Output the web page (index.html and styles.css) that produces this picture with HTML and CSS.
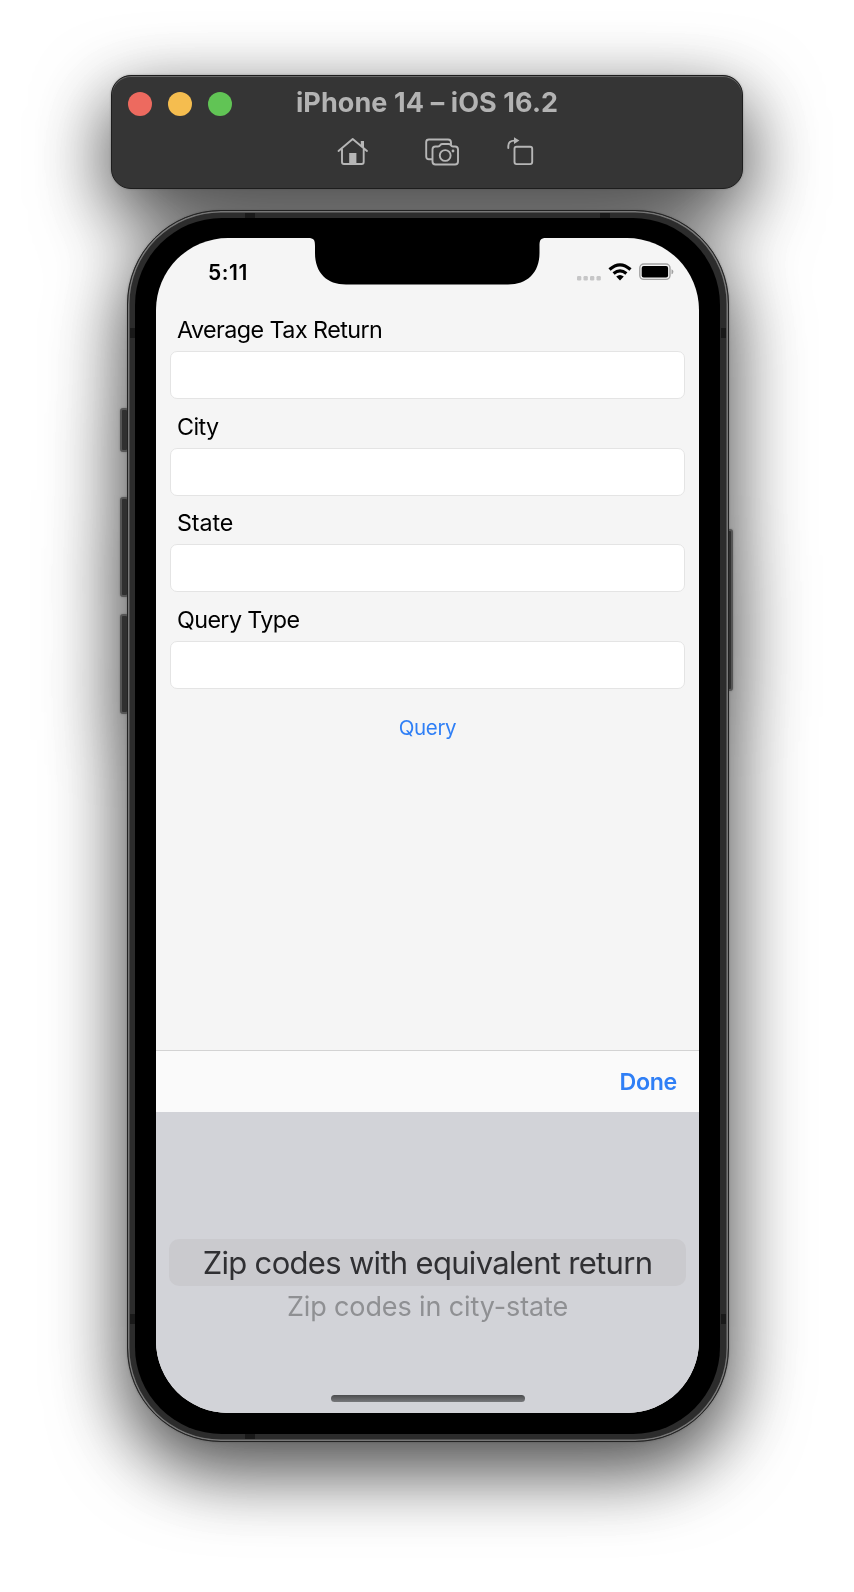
FILE: index.html
```html
<!DOCTYPE html>
<html lang="en">
<head>
<meta charset="utf-8">
<title>iPhone 14 – iOS 16.2</title>
<link rel="stylesheet" href="styles.css">
</head>
<body>
<main class="simulator">
  <header class="window-bar">
    <div class="title-row">
      <div class="lights"><i class="light red"></i><i class="light yellow"></i><i class="light green"></i></div>
      <h1 class="title">iPhone 14 – iOS 16.2</h1>
    </div>
    <div class="tools">
      <svg class="tool" width="32" height="30" viewBox="0 0 32 30"><path d="M1.500 14 L15.700 2 L30 14 M5 12.500 V25 Q5 27 7 27 H24.700 Q26.700 27 26.700 25 V12.500"/><path class="solid" d="M12.200 16 H19.400 V27 H12.200 Z M23.800 4 H27 V11.500 L23.800 9 Z"/></svg>
      <svg class="tool camera" width="34" height="30" viewBox="0 0 34 30"><path d="M7 22.300 H4 Q1.200 22.300 1.200 19.500 V5 Q1.200 2.500 4 2.500 H23 Q26 2.500 26 5.500 V7.500"/><path d="M10.500 9.500 H13 Q14.500 9.500 15.300 8 Q16 7 17.500 7 H23.500 Q25 7 25.700 8 Q26.500 9.500 28 9.500 H30 Q33 9.500 33 12.500 V24.500 Q33 27.500 30 27.500 H10.500 Q7.500 27.500 7.500 24.500 V12.500 Q7.500 9.500 10.500 9.500 Z"/><circle cx="20.200" cy="18.500" r="5.400"/><circle class="solid" cx="28" cy="14" r="1.400"/></svg>
      <svg class="tool" width="28" height="30" viewBox="0 0 28 30"><path d="M1.300 11 V9 Q1.300 3.600 7.500 3.600 H8"/><path class="solid" d="M7 .3 L12.400 3.600 L7 6.900 Z"/><rect x="7.500" y="9.800" width="17.700" height="17.300" rx="2"/></svg>
    </div>
  </header>

  <section class="device">
    <i class="key key-mute"></i><i class="key key-up"></i><i class="key key-down"></i><i class="key key-power"></i>
    <div class="frame">
      <i class="band band-tl"></i><i class="band band-tr"></i><i class="band band-bl"></i>
      <i class="band side band-lt"></i><i class="band side band-rt"></i><i class="band side band-lb"></i><i class="band side band-rb"></i>
      <div class="bezel">
        <div class="screen">
          <svg class="notch" width="238" height="47" viewBox="0 0 238 47"><path d="M0 0 C6 0 7 2 7 8 V15 C7 35 19 46.500 38 46.500 H200 C219 46.500 231.500 35 231.500 15 V8 C231.500 2 232.500 0 238 0 Z"/></svg>
          <div class="status">
            <span class="time">5:11</span>
            <div class="indicators">
              <svg width="24" height="5" viewBox="0 0 24 5" fill="#c6c6c7"><rect width="4.300" height="4.500" rx="1.200"/><rect x="6.500" width="4.300" height="4.500" rx="1.200"/><rect x="13" width="4.300" height="4.500" rx="1.200"/><rect x="19.500" width="4.300" height="4.500" rx="1.200"/></svg>
              <svg class="wifi" width="24" height="18" viewBox="0 0 24 18" fill="none" stroke="#000" stroke-width="3.200"><path d="M1.500 6.500 Q12 -2.900 22.500 6.500"/><path d="M5.600 10.600 Q12 5.300 18.400 10.600"/><path d="M8.200 13.600 Q12 10.600 15.800 13.600 L12 17.400 Z" fill="#000" stroke="none"/></svg>
              <svg class="battery" width="35" height="18" viewBox="0 0 35 18"><rect x=".8" y="1" width="30.200" height="15.400" rx="4" fill="none" stroke="#a2a2a2" stroke-width="1.400"/><rect x="2.700" y="3" width="26.400" height="11.500" rx="2" fill="#000"/><path d="M32.500 6.200 Q34.400 6.700 34.400 8.700 Q34.400 10.700 32.500 11.200 Z" fill="#a2a2a2"/></svg>
            </div>
          </div>
          <form class="form">
            <label class="label tax" for="tax">Average Tax Return</label><input class="field" id="tax">
            <label class="label" for="city">City</label><input class="field" id="city">
            <label class="label state" for="state">State</label><input class="field" id="state">
            <label class="label" for="type">Query Type</label><input class="field" id="type">
            <button class="query" type="button">Query</button>
          </form>
          <div class="toolbar"><button class="done" type="button">Done</button></div>
          <div class="picker">
            <div class="option selected"><span>Zip codes with equivalent return</span></div>
            <div class="option next"><span>Zip codes in city-state</span></div>
            <div class="home-indicator"></div>
          </div>
        </div>
      </div>
    </div>
  </section>
</main>
</body>
</html>
```
FILE: styles.css
```css
* { box-sizing: border-box; }
html, body { margin: 0; background: #fff; }
body { width: 854px; height: 1592px; overflow: hidden; font-family: Inter, "Liberation Sans", sans-serif; }
button { border: 0; background: none; padding: 0; font-family: inherit; }

.simulator {
  display: flex; flex-direction: column; align-items: center;
  width: 854px; height: 1592px; padding-top: 75px;
  filter: drop-shadow(0 26px 38px rgba(0,0,0,.65)) drop-shadow(0 0 1px rgba(0,0,0,.3));
}

.window-bar {
  width: 632px; height: 114px; border-radius: 20px; flex: none;
  background: #353535; border: 1px solid #1d1d1d; box-shadow: inset 0 1px 0 #686868;
}
.title-row { display: grid; grid-template-columns: 130px 1fr 130px; height: 55px; align-items: center; }
.lights { display: flex; gap: 16px; padding-left: 16px; padding-top: 1px; }
.light { width: 24px; height: 24px; border-radius: 50%; flex: none; }
.red { background: #ed6a5f; }
.yellow { background: #f5bd4f; }
.green { background: #61c455; }
.title { margin: 0 0 1px; text-align: center; font-size: 27px; line-height: 32px; font-weight: 700; color: #b3b3b3; white-space: nowrap; letter-spacing: .1px; }
.tools { display: flex; padding: 6px 0 0 225px; }
.tool { fill: none; stroke: #b6b6b6; stroke-width: 1.9; stroke-linecap: round; stroke-linejoin: round; }
.tool .solid { fill: #b6b6b6; stroke: none; }
.camera { margin: 0 48px 0 56px; }

.device { position: relative; width: 602px; height: 1232px; margin: 21px 0 0 2px; flex: none; }
.frame {
  position: relative; width: 602px; height: 1232px; border-radius: 94px; padding: 7px;
  background: #2c2c2c; border: 1px solid #222; box-shadow: inset 0 0 0 1.5px #777;
}
.bezel { position: relative; width: 585px; height: 1216px; padding: 20px 21px; border-radius: 87px; background: #000; }
.screen {
  position: relative; display: flex; flex-direction: column; overflow: hidden;
  width: 543px; height: 1175px; border-radius: 72px; background: #f5f5f5;
}
.key { position: absolute; left: -7px; width: 9px; background: #303030; border: 2px solid #555; border-radius: 3px; }
.key-mute { top: 198px; height: 44px; }
.key-up { top: 287px; height: 100px; }
.key-down { top: 404px; height: 100px; }
.key-power { left: auto; right: -4px; top: 319px; height: 162px; }
.band { position: absolute; width: 10px; height: 5px; background: #191919; }
.band-tl { left: 117px; top: 2px; }
.band-tr { right: 118px; top: 2px; }
.band-bl { left: 117px; bottom: 2px; }
.side { width: 5px; height: 10px; }
.band-lt { left: 2px; top: 117px; }
.band-rt { right: 2px; top: 117px; }
.band-lb { left: 2px; bottom: 117px; }
.band-rb { right: 2px; bottom: 117px; }

.notch { position: absolute; left: 152px; top: 0; }
.status { display: flex; justify-content: space-between; height: 70px; padding: 22px 25px 0 52px; flex: none; }
.time { font-size: 21px; line-height: 26px; font-weight: 600; letter-spacing: .6px; }
.indicators { display: flex; align-items: flex-end; height: 21px; }
.wifi { margin: 0 7px 0 7px; }

.form { display: flex; flex-direction: column; height: 742px; padding: 3px 14px 0 14px; flex: none; }
.label { height: 40px; padding-left: 7px; font-size: 23.3px; line-height: 37px; letter-spacing: -.6px; color: #000; }
.tax { letter-spacing: -.55px; }
.state { letter-spacing: -.1px; }
.field { width: 100%; height: 48px; margin: 0 0 8.600px; border: 1px solid #e4e4e4; border-radius: 7px; background: #fff; padding: 0 10px; }
.query { align-self: center; height: 34px; margin-top: 13px; font-size: 20.5px; letter-spacing: -.4px; color: #2f7ff6; }
.toolbar { display: flex; justify-content: flex-end; align-items: center; height: 62px; padding-right: 22px; background: #fafafa; border-top: 1px solid #d3d3d3; flex: none; }
.done { font-size: 23.2px; letter-spacing: -.3px; font-weight: 600; color: #2f7ff6; }
.picker { display: flex; flex-direction: column; align-items: center; height: 301px; padding-top: 127px; background: #d2d3d8; flex: none; }
.option { display: flex; justify-content: center; align-items: center; white-space: nowrap; }
.selected { width: 517px; height: 47px; border-radius: 10px; background: #cacace; color: #303033; font-size: 31px; letter-spacing: -.69px; }
.next { height: 40px; color: #8f9093; font-size: 27px; letter-spacing: -.12px; }
.home-indicator { width: 194px; height: 7px; margin-top: 69px; border-radius: 4px; background: linear-gradient(#4b4c4e, #77787b); }
```
